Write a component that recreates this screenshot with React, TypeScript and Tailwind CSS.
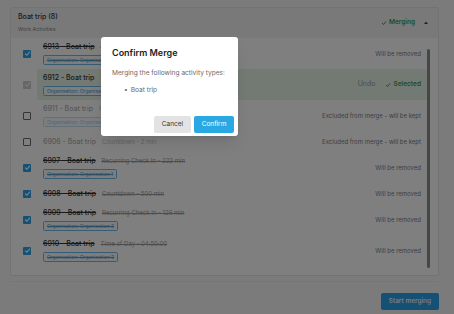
import React from 'react';

type RowState = 'removed' | 'selected' | 'excluded';

type Row = {
  id: number;
  meta: string;
  org?: string;
  state: RowState;
};

const rows: Row[] = [
  { id: 6913, meta: 'Countdown - 10 min', org: 'Organisation: Organisation 1', state: 'removed' },
  { id: 6912, meta: 'Countdown - 5 min', org: 'Organisation: Organisation 1', state: 'selected' },
  { id: 6911, meta: 'Recurring Check In - 60 min', org: 'Organisation: Organisation 1', state: 'excluded' },
  { id: 6906, meta: 'Countdown - 2 min', state: 'excluded' },
  { id: 6907, meta: 'Recurring Check In - 222 min', org: 'Organisation: Organisation 1', state: 'removed' },
  { id: 6908, meta: 'Countdown - 500 min', state: 'removed' },
  { id: 6909, meta: 'Recurring Check In - 126 min', org: 'Organisation: Organisation 2', state: 'removed' },
  { id: 6910, meta: 'Time of Day - 04:50:00', org: 'Organisation: Organisation 2', state: 'removed' },
];

const Check = ({ className }: { className?: string }) => (
  <svg viewBox="0 0 12 12" className={className} fill="none" stroke="currentColor" strokeWidth="2" strokeLinecap="round" strokeLinejoin="round">
    <polyline points="2.5,6.5 5,9 9.5,3.5" />
  </svg>
);

const Checkbox = ({ state }: { state: RowState }) => {
  if (state === 'removed') {
    return (
      <div className="w-[8px] h-[8px] rounded-[1px] bg-[#2aa3ea] flex items-center justify-center text-white">
        <Check className="w-[7px] h-[7px]" />
      </div>
    );
  }
  if (state === 'selected') {
    return (
      <div className="w-[8px] h-[8px] rounded-[1px] bg-[#cdcdcd] flex items-center justify-center text-[#f4f4f4]">
        <Check className="w-[7px] h-[7px]" />
      </div>
    );
  }
  return <div className="w-[8px] h-[8px] rounded-[1px] border border-[#6a6a6a] bg-white" />;
};

const ActivityRow = ({ row }: { row: Row }) => {
  const removed = row.state === 'removed';
  const excluded = row.state === 'excluded';

  const titleCls = removed
    ? 'text-[#333] line-through'
    : excluded
    ? 'text-[#b0b0b0]'
    : 'text-[#333]';
  const metaCls = removed
    ? 'text-[#9a9a9a] line-through'
    : excluded
    ? 'text-[#c4c4c4]'
    : 'text-[#a0a0a0]';
  const badgeCls = removed
    ? 'border-[#6fb6e4] text-[#5a9fcc] line-through'
    : excluded
    ? 'border-[#c4e0f2] text-[#a8d0ec]'
    : 'border-[#6fb6e4] text-[#3c9ad6]';

  return (
    <div className={`flex ${row.org ? 'h-[31px]' : 'h-[21px]'}`}>
      <div className="w-[26px] shrink-0 flex items-center pl-[12px]">
        <Checkbox state={row.state} />
      </div>
      <div
        className={`flex-1 min-w-0 flex items-center pl-[6px] pr-[8px] ${
          row.state === 'selected' ? 'bg-[#e7f4e8]' : ''
        }`}
      >
        <div className="flex flex-col min-w-0">
          <div className="flex items-baseline gap-[6px] leading-[10px] whitespace-nowrap">
            <span className={`text-[7px] font-medium ${titleCls}`}>{row.id} - Boat trip</span>
            <span className={`text-[6px] ${metaCls}`}>{row.meta}</span>
          </div>
          {row.org && (
            <div className="mt-[3px] flex">
              <span
                className={`h-[10px] px-[3px] border rounded-[1.5px] bg-[#f7fbfe] text-[5px] leading-none flex items-center whitespace-nowrap ${badgeCls}`}
              >
                {row.org}
              </span>
            </div>
          )}
        </div>
        <div className="ml-auto shrink-0 flex items-center justify-end whitespace-nowrap">
          {row.state === 'removed' && <span className="text-[6px] text-[#808080]">Will be removed</span>}
          {row.state === 'excluded' && (
            <span className="text-[6px] text-[#808080]">Excluded from merge - will be kept</span>
          )}
          {row.state === 'selected' && (
            <div className="flex items-center gap-[10px]">
              <span className="text-[7px] text-[#9a9a9a]">Undo</span>
              <span className="flex items-center gap-[2px] text-[6.5px] font-semibold text-[#3f9a48]">
                <Check className="w-[6px] h-[6px]" />
                Selected
              </span>
            </div>
          )}
        </div>
      </div>
    </div>
  );
};

export default function App() {
  return (
    <div className="relative w-[454px] h-[314px] overflow-hidden bg-[#f6f6f6] font-['Inter',sans-serif]">
      <div className="pt-[7px] pl-[10px] pr-[15px]">
        <div className="w-[429px] bg-white border border-[#e6e6e6] rounded-[2px]">
          <div className="h-[30px] bg-[#f2f3f4] flex items-start justify-between px-[7px] pt-[4px]">
            <div className="flex flex-col">
              <span className="text-[7px] font-medium leading-[10px] text-[#333]">Boat trip (8)</span>
              <span className="mt-[3px] text-[5.3px] leading-[8px] text-[#888]">Work Activities</span>
            </div>
            <div className="flex items-center gap-[9px] mt-[6px] mr-[3px]">
              <span className="flex items-center gap-[2px] text-[6.5px] font-semibold text-[#3f9a48]">
                <Check className="w-[6px] h-[6px]" />
                Merging
              </span>
              <svg viewBox="0 0 4 3" className="w-[4px] h-[3px] text-[#444]">
                <polygon points="0,3 2,0.5 4,3" fill="currentColor" />
              </svg>
            </div>
          </div>
          <div className="flex pb-[9px]">
            <div className="flex-1 min-w-0 flex flex-col">
              {rows.map((r) => (
                <ActivityRow key={r.id} row={r} />
              ))}
            </div>
            <div className="w-[3px] shrink-0 mt-[11px] mb-[-2px] ml-[-2px] mr-[8px] bg-[#8c8c8c] rounded-full" />
          </div>
        </div>
        <div className="mt-[5px] w-[429px] border-t border-[#ececec]" />
        <div className="w-[429px] flex justify-end mt-[11px]">
          <button className="h-[17px] px-[8px] rounded-[2px] bg-[#2aa3ea] text-white text-[6.5px] font-medium">
            Start merging
          </button>
        </div>
      </div>

      <div className="absolute inset-0 bg-black/50" />

      <div className="absolute left-[101px] top-[37px] w-[137px] h-[99px] bg-white rounded-[3px] shadow-lg flex flex-col">
        <div className="px-[11px] pt-[10px] text-[9px] font-semibold leading-[12px] text-[#222]">Confirm Merge</div>
        <div className="px-[11px] mt-[10px] text-[6.6px] leading-[9px] text-[#6b6b6b] whitespace-nowrap">
          Merging the following activity types:
        </div>
        <div className="pl-[23px] mt-[8px] flex items-center gap-[3px] text-[6.6px] leading-[9px] text-[#6b6b6b]">
          <span>•</span>
          <span>Boat trip</span>
        </div>
        <div className="mt-auto flex justify-end gap-[3px] px-[4px] pb-[3px]">
          <button className="w-[37px] h-[17px] rounded-[2px] bg-[#e3e3e3] text-[6.5px] text-[#333]">Cancel</button>
          <button className="w-[40px] h-[17px] rounded-[2px] bg-[#2aa8e3] text-[6.5px] text-white">Confirm</button>
        </div>
      </div>
    </div>
  );
}
